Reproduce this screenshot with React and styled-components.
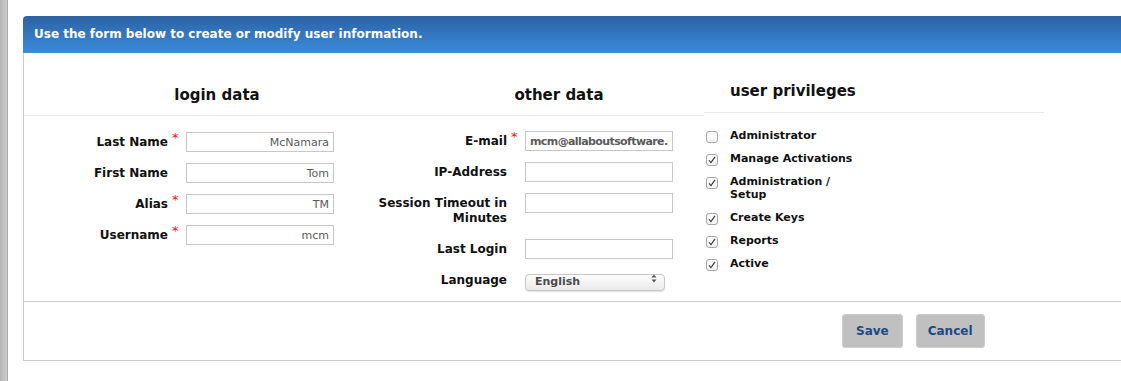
import styled, { createGlobalStyle } from 'styled-components';

const GlobalStyle = createGlobalStyle`
  html, body {
    margin: 0;
    padding: 0;
    background: #ffffff;
    overflow: hidden;
  }
  body {
    font-family: "DejaVu Sans", Verdana, sans-serif;
    color: #111;
  }
`;

const Page = styled.div`
  display: flex;
  height: 381px;
`;

const WindowEdge = styled.div`
  width: 7px;
  flex: none;
  background: linear-gradient(to right, #b4b4b4, #cdcdcd);
  border-right: 1px solid #a9a9a9;
`;

const Main = styled.div`
  padding: 16px 0 0 15px;
`;

const Panel = styled.div`
  width: 1130px;
  border-radius: 4px 0 0 0;
  overflow: hidden;
`;

const PanelHeader = styled.div`
  height: 37px;
  box-sizing: border-box;
  padding: 0 0 0 11px;
  display: flex;
  align-items: center;
  background: linear-gradient(to bottom, #2c62a3, #3a8adb);
  border-bottom: 1px solid #4a8fd0;
  color: #fff;
  font-size: 12px;
  font-weight: bold;
`;

const Content = styled.div`
  border: 1px solid #cccccc;
  border-top: 0;
`;

const Body = styled.div`
  display: flex;
  height: 248px;
`;

const DataSection = styled.div`
  width: 680px;
  flex: none;
`;

const DataHeads = styled.div`
  display: grid;
  grid-template-columns: 342px 342px;
  padding-left: 22px;
  height: 63px;
  box-sizing: border-box;
  border-bottom: 1px solid #e8e8e8;
  align-items: end;
  padding-bottom: 10px;
`;

const Heading = styled.h3`
  margin: 0;
  font-size: 15px;
  line-height: 20px;
  font-weight: bold;
  text-align: ${p => (p.$left ? 'left' : 'center')};
`;

const Columns = styled.div`
  display: flex;
  align-items: flex-start;
`;

const FormColumn = styled.div`
  display: grid;
  grid-template-columns: ${p => p.$labelWidth}px 18px 148px;
  row-gap: 11px;
  align-items: start;
  align-content: start;
  width: ${p => p.$width}px;
  box-sizing: border-box;
  padding-left: ${p => p.$padLeft}px;
  padding-top: ${p => p.$padTop}px;
`;

const Label = styled.label`
  font-size: 12px;
  font-weight: bold;
  line-height: 15px;
  padding: 3px 0 2px;
  text-align: right;
`;

const Required = styled.span`
  color: #ee1111;
  font-size: 13px;
  line-height: 10px;
  padding: 1px 0 0 4px;
`;

const TextInput = styled.input`
  width: 148px;
  height: 20px;
  box-sizing: border-box;
  margin: 0;
  border: 1px solid #c8c8c8;
  padding: 0 4px;
  font-family: inherit;
  font-size: 11px;
  font-weight: ${p => (p.$bold ? 'bold' : 'normal')};
  letter-spacing: ${p => (p.$bold ? '-0.6px' : '0')};
  color: #5a5a5a;
  text-align: ${p => (p.$left ? 'left' : 'right')};
  outline: none;
`;

const SelectWrap = styled.div`
  position: relative;
  width: 140px;
  height: 17px;
`;

const Select = styled.select`
  appearance: none;
  width: 140px;
  height: 17px;
  margin: 0;
  box-sizing: border-box;
  padding: 0 0 2px 9px;
  border: 1px solid #c6c6c6;
  border-radius: 4px;
  background: linear-gradient(to bottom, #fdfdfd, #e9e9e9);
  font-family: inherit;
  font-size: 11px;
  line-height: 13px;
  font-weight: bold;
  color: #4a4a4a;
  box-shadow: 0 1px 1px rgba(0, 0, 0, 0.12);
`;

const SelectArrows = styled.svg`
  position: absolute;
  right: 8px;
  top: 4px;
  pointer-events: none;
`;

const PrivSection = styled.div`
  width: 340px;
  flex: none;
`;

const PrivHead = styled.div`
  height: 60px;
  box-sizing: border-box;
  padding: 0 0 11px 26px;
  display: flex;
  align-items: flex-end;
  border-bottom: 1px solid #e8e8e8;
`;

const PrivList = styled.ul`
  list-style: none;
  margin: 0;
  padding: 16px 0 0 2px;
  display: flex;
  flex-direction: column;
  gap: 9px;
`;

const PrivItem = styled.li`
  display: flex;
  align-items: flex-start;
  gap: 12px;
`;

const Box = styled.span`
  width: 12px;
  height: 12px;
  flex: none;
  box-sizing: border-box;
  margin-top: 2px;
  border: 1px solid #a8a8a8;
  border-radius: 3px;
  background: linear-gradient(to bottom, #ffffff, #f1f1f1);
  display: flex;
  align-items: center;
  justify-content: center;
`;

const PrivLabel = styled.span`
  width: 130px;
  font-size: 11px;
  font-weight: bold;
  line-height: 13px;
  margin-bottom: ${p => (p.$tall ? '1px' : '0')};
`;

const Footer = styled.div`
  height: 59px;
  box-sizing: border-box;
  border-top: 1px solid #cccccc;
  display: flex;
  gap: 13px;
  padding: 12px 0 0 818px;
`;

const Button = styled.button`
  height: 34px;
  padding: 0 ${p => p.$pad}px;
  margin: 0;
  background: #c0c0c0;
  border: 1px solid #cdcdcd;
  border-radius: 3px;
  font-family: inherit;
  font-size: 12px;
  font-weight: bold;
  color: #1d4a80;
  cursor: pointer;
`;

const loginFields = [
  { label: 'Last Name', value: 'McNamara', required: true },
  { label: 'First Name', value: 'Tom' },
  { label: 'Alias', value: 'TM', required: true },
  { label: 'Username', value: 'mcm', required: true },
];

const otherFields = [
  { label: 'E-mail', value: 'mcm@allaboutsoftware.com', required: true, left: true },
  { label: 'IP-Address', value: '' },
  { label: 'Session Timeout in Minutes', value: '' },
  { label: 'Last Login', value: '' },
];

const privileges = [
  { label: 'Administrator', checked: false },
  { label: 'Manage Activations', checked: true },
  { label: 'Administration / Setup', checked: true, tall: true },
  { label: 'Create Keys', checked: true },
  { label: 'Reports', checked: true },
  { label: 'Active', checked: true },
];

const Field = ({ label, value, required, left }) => (
  <>
    <Label>{label}</Label>
    {required ? <Required>*</Required> : <span />}
    <TextInput defaultValue={value} $left={left} $bold={left} />
  </>
);

const Check = ({ checked }) => (
  <Box>
    {checked && (
      <svg width="8" height="8" viewBox="0 0 8 8">
        <path d="M1 4.3 L3 6.6 L7 0.8" fill="none" stroke="#3c3c3c" strokeWidth="1.2" />
      </svg>
    )}
  </Box>
);

export default function App() {
  return (
    <>
      <GlobalStyle />
      <Page>
        <WindowEdge />
        <Main>
          <Panel>
            <PanelHeader>Use the form below to create or modify user information.</PanelHeader>
            <Content>
              <Body>
                <DataSection>
                  <DataHeads>
                    <Heading>login data</Heading>
                    <Heading>other data</Heading>
                  </DataHeads>
                  <Columns>
                    <FormColumn $labelWidth={144} $width={331} $padLeft={0} $padTop={16}>
                      {loginFields.map(f => (
                        <Field key={f.label} {...f} />
                      ))}
                    </FormColumn>
                    <FormColumn $labelWidth={130} $width={349} $padLeft={22} $padTop={15}>
                      {otherFields.map(f => (
                        <Field key={f.label} {...f} />
                      ))}
                      <Label>Language</Label>
                      <span />
                      <SelectWrap>
                        <Select defaultValue="en">
                          <option value="en">English</option>
                          <option value="de">Deutsch</option>
                        </Select>
                        <SelectArrows width="6" height="9" viewBox="0 0 6 9">
                          <path d="M0.5 3.5 L3 0.5 L5.5 3.5 Z M0.5 5.5 L3 8.5 L5.5 5.5 Z" fill="#555" />
                        </SelectArrows>
                      </SelectWrap>
                    </FormColumn>
                  </Columns>
                </DataSection>
                <PrivSection>
                  <PrivHead>
                    <Heading $left>user privileges</Heading>
                  </PrivHead>
                  <PrivList>
                    {privileges.map(p => (
                      <PrivItem key={p.label}>
                        <Check checked={p.checked} />
                        <PrivLabel $tall={p.tall}>{p.label}</PrivLabel>
                      </PrivItem>
                    ))}
                  </PrivList>
                </PrivSection>
              </Body>
              <Footer>
                <Button $pad={13}>Save</Button>
                <Button $pad={11}>Cancel</Button>
              </Footer>
            </Content>
          </Panel>
        </Main>
      </Page>
    </>
  );
}
